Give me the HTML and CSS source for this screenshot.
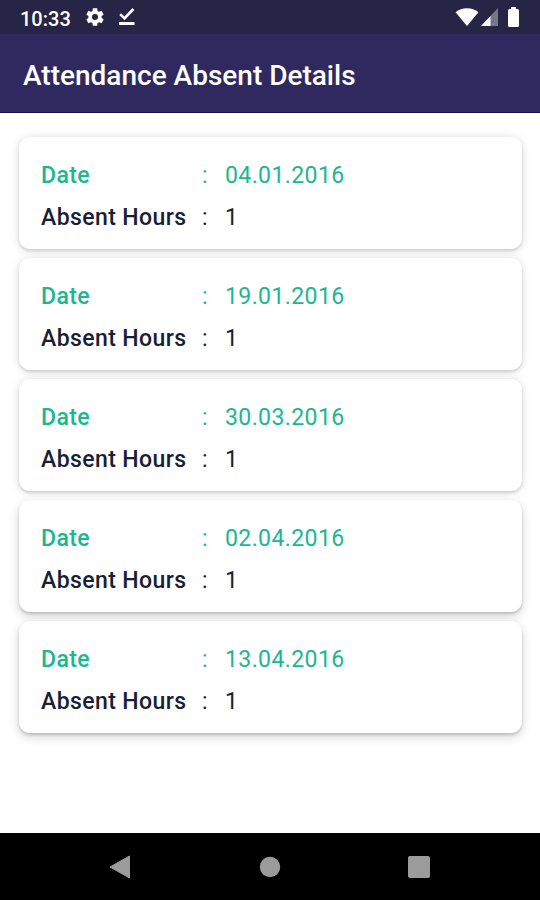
FILE: index.html
```
<!DOCTYPE html>
<html lang="en">
<head>
<meta charset="UTF-8">
<meta name="viewport" content="width=device-width, initial-scale=1.0">
<title>Attendance Absent Details</title>
<link rel="stylesheet" href="styles.css">
</head>
<body>
<div class="status-bar">
  <span class="time">10:33</span>
  <svg class="gear" width="22" height="22" viewBox="0 0 24 24"><path fill="#fff" d="M19.14 12.94c.04-.3.06-.61.06-.94 0-.32-.02-.64-.07-.94l2.03-1.58c.18-.14.23-.41.12-.61l-1.92-3.32c-.12-.22-.37-.29-.59-.22l-2.39.96c-.5-.38-1.03-.7-1.62-.94l-.36-2.54c-.04-.24-.24-.41-.48-.41h-3.84c-.24 0-.43.17-.47.41l-.36 2.54c-.59.24-1.13.57-1.62.94l-2.39-.96c-.22-.08-.47 0-.59.22L2.74 8.87c-.12.21-.08.47.12.61l2.03 1.58c-.05.3-.09.63-.09.94s.02.64.07.94l-2.03 1.58c-.18.14-.23.41-.12.61l1.92 3.32c.12.22.37.29.59.22l2.39-.96c.5.38 1.03.7 1.62.94l.36 2.54c.05.24.24.41.48.41h3.84c.24 0 .44-.17.47-.41l.36-2.54c.59-.24 1.13-.56 1.62-.94l2.39.96c.22.08.47 0 .59-.22l1.92-3.32c.12-.22.07-.47-.12-.61l-2.01-1.58zM12 15.3a3.3 3.3 0 1 1 0-6.6 3.3 3.3 0 0 1 0 6.6z"/></svg>
  <svg class="check" width="18" height="20" viewBox="0 0 18 20"><path fill="none" stroke="#fff" stroke-width="2.6" d="M2.2 7.2l4.3 4.3L15.4 2"/><path fill="#fff" d="M1 15h15.5v3H1z"/></svg>
  <div class="status-right">
    <svg width="24" height="20" viewBox="0 0 24 20"><path fill="#fff" d="M.5 5.2C3.7 2.6 7.6 1.2 12 1.2s8.3 1.4 11.5 4L12 19z"/></svg>
    <svg width="17" height="18" viewBox="0 0 17 18"><path fill="#77778c" d="M17 0v18H0z"/><path fill="#fff" d="M9.5 8v10H0z"/></svg>
    <svg class="battery" width="11" height="20" viewBox="0 0 11 20"><path fill="#fff" d="M3 0h5v2h1.5Q11 2 11 3.5v15q0 1.5-1.5 1.5h-8Q0 20 0 18.5v-15Q0 2 1.5 2H3z"/></svg>
  </div>
</div>
<h1 class="header">Attendance Absent Details</h1>
<div class="list">
  <div class="card">
    <div class="row date"><b>Date</b><span>:</span><span>04.01.2016</span></div>
    <div class="row"><b>Absent Hours</b><span>:</span><span>1</span></div>
  </div>
  <div class="card">
    <div class="row date"><b>Date</b><span>:</span><span>19.01.2016</span></div>
    <div class="row"><b>Absent Hours</b><span>:</span><span>1</span></div>
  </div>
  <div class="card">
    <div class="row date"><b>Date</b><span>:</span><span>30.03.2016</span></div>
    <div class="row"><b>Absent Hours</b><span>:</span><span>1</span></div>
  </div>
  <div class="card">
    <div class="row date"><b>Date</b><span>:</span><span>02.04.2016</span></div>
    <div class="row"><b>Absent Hours</b><span>:</span><span>1</span></div>
  </div>
  <div class="card">
    <div class="row date"><b>Date</b><span>:</span><span>13.04.2016</span></div>
    <div class="row"><b>Absent Hours</b><span>:</span><span>1</span></div>
  </div>
</div>
<div class="nav-bar">
  <svg width="22" height="24" viewBox="0 0 22 24"><path fill="#9b9b9b" stroke="#9b9b9b" stroke-linejoin="round" d="M20.5 1v22L1 12z"/></svg>
  <svg width="22" height="22" viewBox="0 0 22 22"><circle cx="11" cy="11" r="10.2" fill="#9b9b9b"/></svg>
  <svg width="22" height="22" viewBox="0 0 22 22"><rect width="22" height="22" rx="2" fill="#9b9b9b"/></svg>
</div>
</body>
</html>
```
FILE: styles.css
```
* {
  box-sizing: border-box;
}
body {
  margin: 0;
  height: 900px;
  display: flex;
  flex-direction: column;
  font-family: Roboto, sans-serif;
  background-color: #fff;
}
.status-bar {
  height: 34px;
  padding: 0 21px 0 20px;
  display: flex;
  align-items: center;
  background-color: #262545;
  color: #fff;
}
.time {
  width: 64px;
  font-size: 20px;
  font-weight: 500;
  padding-top: 3px;
}
.check {
  margin-left: 12px;
}
.status-right {
  display: flex;
  align-items: center;
  margin-left: auto;
}
.status-right svg + svg {
  margin-left: 2px;
}
.status-right .battery {
  margin-left: 10px;
}
.header {
  height: 79px;
  margin: 0;
  padding: 4px 23px 0;
  line-height: 76px;
  font-size: 28px;
  font-weight: 500;
  color: #fff;
  background-color: #2f295f;
  border-bottom: 1px solid #15104a;
}
.list {
  flex: 1;
  display: flex;
  flex-direction: column;
  gap: 9px;
  padding: 24px 18px 0 19px;
}
.card {
  height: 112px;
  padding: 18px 22px;
  border-radius: 11px;
  background-color: #fff;
  box-shadow: 0 2px 3px rgba(0, 0, 0, 0.12), 0 1px 10px rgba(0, 0, 0, 0.14);
}
.card:nth-child(n + 4) {
  box-shadow: 0 2px 3px rgba(0, 0, 0, 0.16), 0 4px 11px rgba(0, 0, 0, 0.16);
}
.row {
  display: grid;
  grid-template-columns: 161px 23px auto;
  line-height: 42px;
  font-size: 23px;
  letter-spacing: 0.4px;
  color: #182036;
}
.row b {
  font-weight: 500;
}
.date {
  color: #1bb790;
}
.nav-bar {
  height: 67px;
  padding: 0 110px 0 109px;
  display: flex;
  align-items: center;
  justify-content: space-between;
  background-color: #000;
}
```
